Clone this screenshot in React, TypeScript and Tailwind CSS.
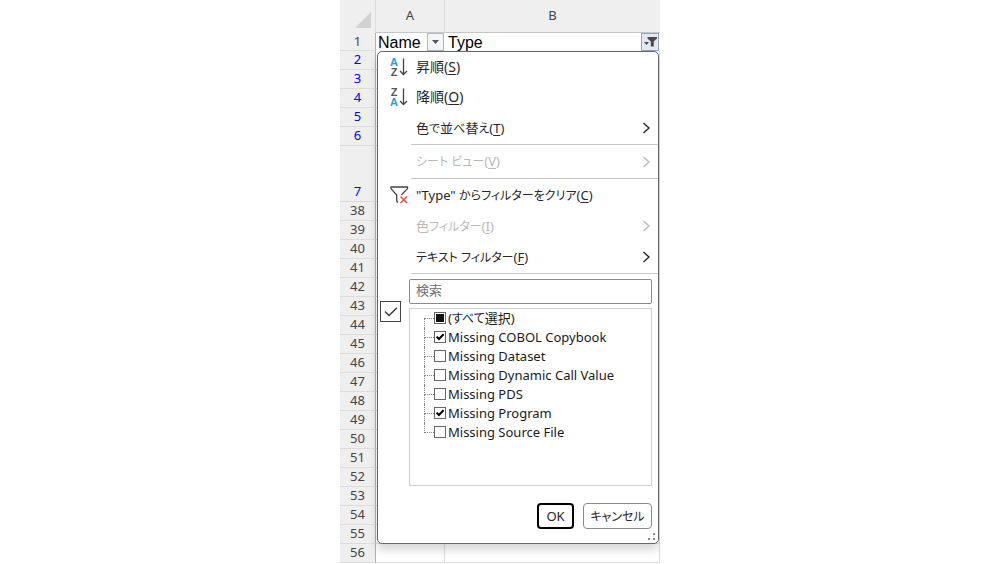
import { useState } from "react";
import type { ReactNode } from "react";
import clsx from "clsx";

type SheetRow = {
  label: string;
  height: string;
  filtered: boolean;
};

const ROW = "h-[19px]";

const rows: SheetRow[] = [
  ...["2", "3", "4", "5", "6"].map((label) => ({
    label,
    height: ROW,
    filtered: true,
  })),
  { label: "7", height: "h-14", filtered: true },
  ...Array.from({ length: 19 }, (_, i) => ({
    label: String(38 + i),
    height: ROW,
    filtered: false,
  })),
];

const typeValues = [
  "Missing COBOL Copybook",
  "Missing Dataset",
  "Missing Dynamic Call Value",
  "Missing PDS",
  "Missing Program",
  "Missing Source File",
];

// UI kana is set one step smaller than kanji and latin
function Kana({ children }: { children: ReactNode }) {
  return <span className="text-[12px]">{children}</span>;
}

function SortIcon({ first, second }: { first: "A" | "Z"; second: "A" | "Z" }) {
  return (
    <span className="flex items-center gap-px" aria-hidden="true">
      <span className="flex w-2 flex-col text-center font-['Liberation_Sans'] text-[11px] leading-[10px] font-bold">
        <span className={first === "A" ? "text-[#2b9be0]" : "text-[#555]"}>
          {first}
        </span>
        <span className={second === "A" ? "text-[#2b9be0]" : "text-[#555]"}>
          {second}
        </span>
      </span>
      <svg width="9" height="18" viewBox="0 0 9 18" fill="none" stroke="#444" strokeWidth="1.3">
        <path d="M4.5 0.5V16.5M1 13L4.5 16.5L8 13" />
      </svg>
    </span>
  );
}

function ClearFilterIcon() {
  return (
    <svg width="19" height="18" viewBox="0 0 19 18" fill="none" aria-hidden="true">
      <path
        d="M8 16.5L6.7 15.2V9L1 2.6V1H17.5V2.6L11.3 9"
        stroke="#444"
        strokeWidth="1.3"
      />
      <path d="M10.5 10.5L17 17M17 10.5L10.5 17" stroke="#f04a4a" strokeWidth="1.5" />
    </svg>
  );
}

type MenuItemProps = {
  text: ReactNode;
  shortcut: string;
  icon?: ReactNode;
  submenu?: boolean;
  disabled?: boolean;
  className?: string;
};

function MenuItem({
  text,
  shortcut,
  icon,
  submenu = false,
  disabled = false,
  className = "h-[30px]",
}: MenuItemProps) {
  return (
    <button
      type="button"
      role="menuitem"
      disabled={disabled}
      className={clsx(
        "flex w-full items-center pr-[7px] text-left",
        disabled ? "text-[#b8b8b8]" : "text-[#262626]",
        className
      )}
    >
      <span className="flex w-[38px] shrink-0 pl-3">{icon}</span>
      <span className="flex-1 whitespace-nowrap">
        {text}(<span className="underline underline-offset-2">{shortcut}</span>)
      </span>
      {submenu && (
        <svg width="9" height="12" viewBox="0 0 9 12" fill="none" stroke="currentColor" strokeWidth="1.4" aria-hidden="true">
          <path d="M1.5 1L7 6L1.5 11" />
        </svg>
      )}
    </button>
  );
}

function Separator() {
  return <div role="separator" className="ml-[33px] h-px bg-[#c8c8c8]" />;
}

type TreeItemProps = {
  label: ReactNode;
  state: "on" | "off" | "mixed";
  first?: boolean;
  last?: boolean;
  onToggle: () => void;
};

function TreeItem({ label, state, first, last, onToggle }: TreeItemProps) {
  return (
    <li className="flex h-[19px]">
      <span className="flex w-[10px] flex-col" aria-hidden="true">
        <span
          className={clsx(
            "h-[10px] border-b border-dotted border-[#808080]",
            !first && "border-l"
          )}
        />
        <span
          className={clsx(
            "h-[9px] border-dotted border-[#808080]",
            !last && "border-l"
          )}
        />
      </span>
      <label className="flex h-[18px] items-center gap-0.5 whitespace-nowrap">
        <span className="grid size-3 place-items-center">
          <input
            type="checkbox"
            checked={state !== "off"}
            onChange={onToggle}
            className="col-start-1 row-start-1 size-3 appearance-none border border-[#666] bg-white"
          />
          {state === "mixed" && (
            <span className="pointer-events-none col-start-1 row-start-1 size-2 bg-[#111]" />
          )}
          {state === "on" && (
            <svg className="pointer-events-none col-start-1 row-start-1" width="8" height="8" viewBox="0 0 8 8" fill="none" stroke="#000" strokeWidth="2">
              <path d="M0.6 3.6L3 6L7.6 1.2" />
            </svg>
          )}
        </span>
        <span>{label}</span>
      </label>
    </li>
  );
}

function FilterMenu() {
  const [query, setQuery] = useState("");
  const [checkMode, setCheckMode] = useState(true);
  const [selected, setSelected] = useState<string[]>([
    "Missing COBOL Copybook",
    "Missing Program",
  ]);

  const allSelected = selected.length === typeValues.length;
  const allState = allSelected ? "on" : selected.length ? "mixed" : "off";

  function toggle(value: string) {
    setSelected((prev) =>
      prev.includes(value) ? prev.filter((v) => v !== value) : [...prev, value]
    );
  }

  return (
    <div
      role="menu"
      className="absolute top-[51px] right-px left-[37px] rounded-[5px] border border-[#666] bg-white font-['Noto_Sans','Noto_Sans_CJK_JP',sans-serif] text-[13px] leading-4 shadow-[0_6px_10px_rgba(0,0,0,0.16)] [font-feature-settings:'palt']"
    >
      <MenuItem text="昇順" shortcut="S" icon={<SortIcon first="A" second="Z" />} className="h-[30px] text-[14px]" />
      <MenuItem text="降順" shortcut="O" icon={<SortIcon first="Z" second="A" />} className="h-[30px] text-[14px]" />
      <MenuItem
        text={<>色<Kana>で</Kana>並<Kana>べ</Kana>替<Kana>え</Kana></>}
        shortcut="T"
        submenu
        className="h-8"
      />
      <Separator />
      <MenuItem text={<Kana>シート ビュー</Kana>} shortcut="V" submenu disabled className="h-[33px]" />
      <Separator />
      <MenuItem
        text={<>"Type" <Kana>からフィルターをクリア</Kana></>}
        shortcut="C"
        icon={<ClearFilterIcon />}
        className="h-8"
      />
      <MenuItem text={<>色<Kana>フィルター</Kana></>} shortcut="I" submenu disabled />
      <MenuItem text={<Kana>テキスト フィルター</Kana>} shortcut="F" submenu className="h-8" />
      <Separator />

      <div className="flex pt-[5px] pr-1.5">
        <div className="w-[31px] shrink-0 pt-[22px] pl-0.5">
          <label className="grid size-[21px] place-items-center">
            <input
              type="checkbox"
              aria-label="選択"
              checked={checkMode}
              onChange={() => setCheckMode((prev) => !prev)}
              className="col-start-1 row-start-1 size-[21px] appearance-none border border-[#444] bg-white"
            />
            {checkMode && (
              <svg className="pointer-events-none col-start-1 row-start-1" width="14" height="10" viewBox="0 0 14 10" fill="none" stroke="#333" strokeWidth="1.3">
                <path d="M1 4.5L5 8.5L13 0.8" />
              </svg>
            )}
          </label>
        </div>
        <div className="flex min-w-0 flex-1 flex-col gap-1">
          <input
            type="text"
            aria-label="検索"
            placeholder="検索"
            value={query}
            onChange={(e) => setQuery(e.target.value)}
            className="h-[25px] w-full rounded-xs border border-[#8a8a8a] px-1.5 pb-1 placeholder:text-[#707070]"
          />
          <ul className="h-[178px] border border-[#d0d0d0] pl-[14px] text-[#1a1a1a]">
            <TreeItem
              label={<>(<Kana>すべて</Kana>選択)</>}
              state={allState}
              first
              onToggle={() => setSelected(allSelected ? [] : typeValues)}
            />
            {typeValues.map((value, i) => (
              <TreeItem
                key={value}
                label={value}
                state={selected.includes(value) ? "on" : "off"}
                last={i === typeValues.length - 1}
                onToggle={() => toggle(value)}
              />
            ))}
          </ul>
        </div>
      </div>

      <div className="flex justify-end gap-[9px] pt-[17px] pr-1.5 pb-[14px]">
        <button type="button" className="h-[26px] w-[37px] rounded-sm border-2 border-black text-[#262626]">
          OK
        </button>
        <button type="button" className="h-[26px] w-[69px] rounded-sm border border-[#8a8a8a] text-[#262626]">
          <Kana>キャンセル</Kana>
        </button>
      </div>

      <svg className="absolute right-0.5 bottom-0.5" width="9" height="9" viewBox="0 0 9 9" fill="#8a8a8a" aria-hidden="true">
        <path d="M6 1h2v2H6zM6 6h2v2H6zM1 6h2v2H1z" />
      </svg>
    </div>
  );
}

export default function App() {
  return (
    <main className="flex min-h-screen justify-center bg-white">
      <div className="relative w-80 overflow-hidden">
        <table className="w-full table-fixed border-separate border-spacing-0 font-['Noto_Sans',sans-serif] text-[13px] leading-4 text-[#444]">
          <thead>
            <tr className="h-[33px] bg-[#efefef]">
              <th className="w-9 border-r border-b border-r-[#dcdcdc] border-b-[#efefef] p-0 pl-3.5 align-bottom">
                <svg className="mb-[3px]" width="18" height="17" viewBox="0 0 18 17" fill="#d2d2d2" aria-hidden="true">
                  <path d="M17 0V16H1z" />
                </svg>
              </th>
              <th className="w-[69px] border-r border-b border-r-[#dcdcdc] border-b-[#c6c6c6] p-0 pb-0.5 font-normal">A</th>
              <th className="border-b border-[#c6c6c6] p-0 pb-0.5 font-normal">B</th>
            </tr>
          </thead>
          <tbody>
            <tr className="h-[18px] font-['Liberation_Sans',sans-serif] text-[16px] text-black">
              <th className="border-r border-b border-r-[#b0b0b0] border-b-[#dcdcdc] bg-[#efefef] p-0 pb-px font-['Noto_Sans',sans-serif] text-[13px] font-normal text-[#444]">
                1
              </th>
              <td className="p-0">
                <div className="flex h-[18px] items-start justify-between pr-px pl-0.5">
                  <span className="pt-0.5">Name</span>
                  <button type="button" aria-label="Name のフィルター" className="flex h-[18px] w-[17px] items-center justify-center border border-[#b4b8c0] bg-[#f4f5f7]">
                    <svg width="7" height="4" viewBox="0 0 7 4" fill="#555">
                      <path d="M0 0H7L3.5 4z" />
                    </svg>
                  </button>
                </div>
              </td>
              <td className="p-0">
                <div className="flex h-[18px] items-start justify-between pr-px pl-[3px]">
                  <span className="pt-0.5">Type</span>
                  <button type="button" aria-label="Type のフィルター" className="flex size-[18px] items-center justify-center border border-[#9aa3b2] bg-[#e3e9f2]">
                    <svg width="13" height="10" viewBox="0 0 13 10" fill="#4a4a4a">
                      <path d="M0 5H5L2.5 8zM3.5 0H13V1.5L9.8 4.6V9.5H6.8V4.6L3.5 1.5z" />
                    </svg>
                  </button>
                </div>
              </td>
            </tr>
            {rows.map((row) => (
              <tr key={row.label} className={row.height}>
                <th
                  className={clsx(
                    "border-r border-b border-r-[#b0b0b0] border-b-[#dcdcdc] bg-[#efefef] p-0 pb-0.5 font-normal",
                    row.filtered ? "align-bottom text-[#0000ff]" : "align-middle"
                  )}
                >
                  {row.label}
                </th>
                <td className="border-r border-b border-[#dcdcdc] p-0" />
                <td className="border-r border-b border-[#dcdcdc] p-0" />
              </tr>
            ))}
          </tbody>
        </table>
        <FilterMenu />
      </div>
    </main>
  );
}
